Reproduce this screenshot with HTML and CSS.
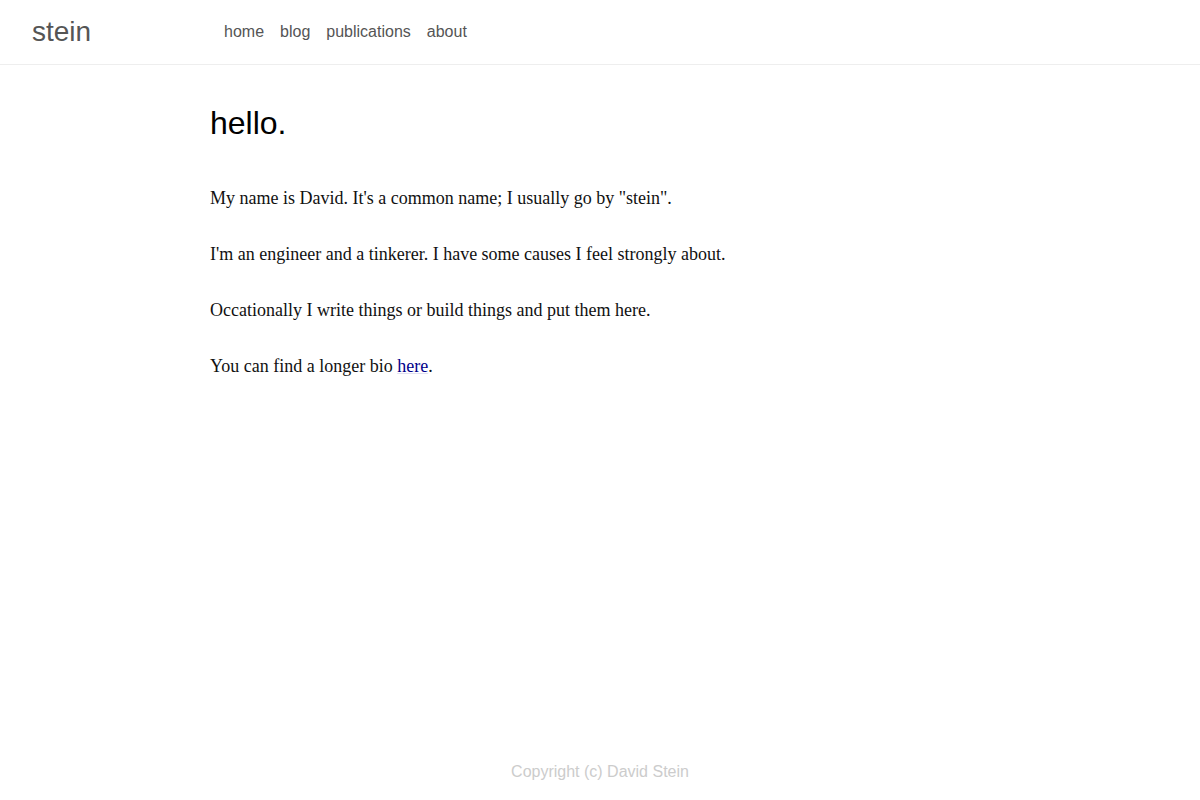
FILE: index.html
```html
<!DOCTYPE html>
<html lang="en">
<head>
    <meta charset="UTF-8">
    <meta name="viewport" content="width=device-width, initial-scale=1.0">
    <title>stein</title>
    <link rel="stylesheet" href="styles.css">
</head>
<body>
    <header class="site-header">
        <a class="site-title" href="#">stein</a>
        <nav class="site-nav">
            <a href="#">home</a>
            <a href="#">blog</a>
            <a href="#">publications</a>
            <a href="#">about</a>
        </nav>
    </header>

    <main class="content">
        <h1>hello.</h1>
        <p>My name is David. It's a common name; I usually go by "stein".</p>
        <p>I'm an engineer and a tinkerer. I have some causes I feel strongly about.</p>
        <p>Occationally I write things or build things and put them here.</p>
        <p>You can find a longer bio <a href="#">here</a>.</p>
    </main>

    <footer class="site-footer">
        Copyright (c) David Stein
    </footer>
</body>
</html>
```

FILE: styles.css
```css
html, body {
    height: 100%;
}

body {
    margin: 0;
    display: flex;
    flex-direction: column;
    background: #fff;
    color: #111;
    font-family: "Liberation Serif", "Times New Roman", serif;
}

.site-header {
    display: flex;
    align-items: center;
    height: 64px;
    padding: 0 32px;
    border-bottom: 1px solid #eee;
    font-family: "Liberation Sans", Arial, sans-serif;
}

.site-title {
    width: 192px;
    font-size: 28px;
    color: #555;
    text-decoration: none;
}

.site-nav {
    display: flex;
    gap: 16px;
}

.site-nav a {
    font-size: 16px;
    color: #555;
    text-decoration: none;
}

.content {
    flex: 1;
    padding: 0 210px;
}

.content h1 {
    margin: 40px 0 42px;
    font-family: "Liberation Sans", Arial, sans-serif;
    font-weight: normal;
    font-size: 32px;
    color: #000;
}

.content p {
    margin: 0 0 28px;
    font-size: 18px;
    line-height: 28px;
}

.content a {
    color: #00008b;
    text-decoration: underline;
    text-decoration-color: rgba(0, 0, 139, 0.12);
}

.site-footer {
    padding: 13px 0 19px;
    text-align: center;
    font-family: "Liberation Sans", Arial, sans-serif;
    font-size: 16px;
    color: #ccc;
}
```
